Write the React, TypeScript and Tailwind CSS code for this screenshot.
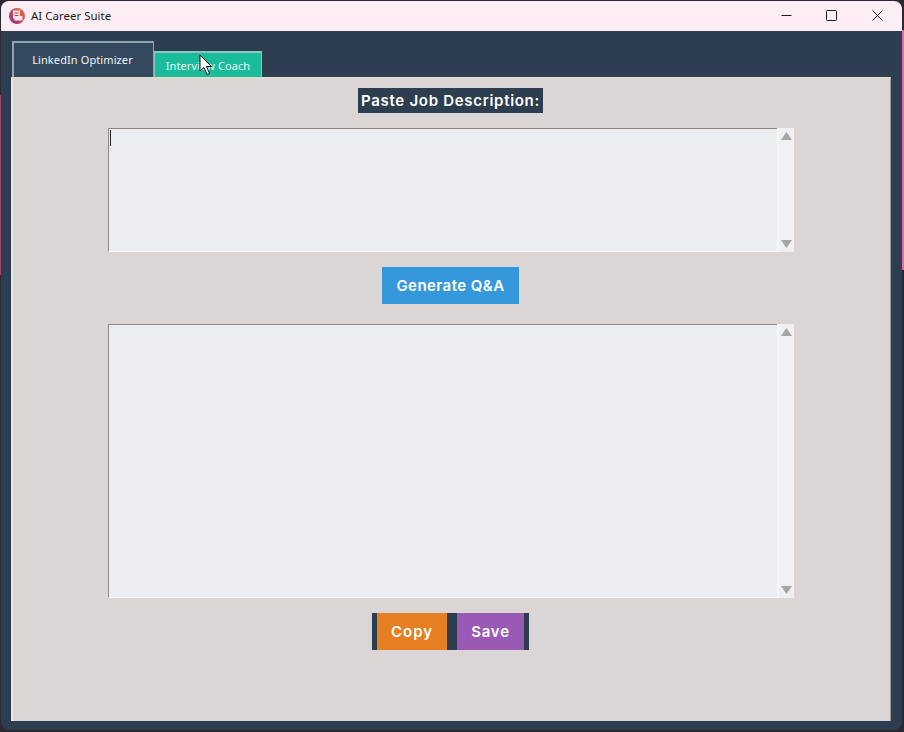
import { useState } from "react";

const uiFont = "font-['Noto_Sans','Open_Sans',sans-serif]";

const ScrollBox = ({ height, showCaret }: { height: string; showCaret?: boolean }) => (
  <div className={`flex w-[686px] ${height}`}>
    <div className="relative flex-1 bg-[#ecedf1] border-t border-l border-t-[#8f8985] border-l-[#8f8985] border-b border-b-white">
      {showCaret && <div className="absolute left-[1px] top-[1px] h-[16px] w-[1px] bg-[#222222]" />}
    </div>
    <div className="flex w-[17px] flex-col items-center justify-between bg-[#f0f0f2] py-[4px] border-l-2 border-l-[#f6f6f8]">
      <svg width="11" height="8" viewBox="0 0 11 8">
        <path d="M5.5 0 L11 8 L0 8 Z" fill="#a5a5a5" />
      </svg>
      <svg width="11" height="8" viewBox="0 0 11 8">
        <path d="M0 0 L11 0 L5.5 8 Z" fill="#a5a5a5" />
      </svg>
    </div>
  </div>
);

const App = () => {
  const [activeTab] = useState("linkedin");

  return (
    <div className="relative h-[732px] w-[904px] overflow-hidden bg-[#2b2733]">
      {/* bits of desktop showing past the window edge */}
      <div className="absolute right-0 top-[30px] h-[240px] w-[2px] bg-[#d96fa6]" />
      <div className="absolute left-0 top-[95px] h-[180px] w-[1px] bg-[#a8456f]" />

      <div className="relative flex h-[729px] w-[901px] ml-[1px] mt-[1px] flex-col overflow-hidden rounded-[8px] bg-[#2c3e50]">
        {/* title bar */}
        <div className="flex h-[30px] shrink-0 items-center justify-between bg-[#fdeef5] pl-[8px]">
          <div className="flex items-center gap-[6px]">
            <svg width="16" height="16" viewBox="0 0 16 16">
              <defs>
                <linearGradient id="logo" x1="1" y1="0" x2="0" y2="1">
                  <stop offset="0" stopColor="#f0703c" />
                  <stop offset="1" stopColor="#8e2a8c" />
                </linearGradient>
              </defs>
              <circle cx="8" cy="8" r="8" fill="url(#logo)" />
              <path d="M4 2.5 H11 V8 H13.5 V12.5 H5.5 V10.5 H4 Z" fill="#fbe3e3" />
              <path d="M5.5 5 H9.5 M5.5 7.5 H9.5" stroke="#d8434f" strokeWidth="1.2" />
            </svg>
            <span className={`text-[11.5px] text-[#1c1c1c] ${uiFont}`}>AI Career Suite</span>
          </div>
          <div className="flex items-center pb-[1px] pr-[2px]">
            <div className="flex w-[45px] justify-center">
              <svg width="11" height="11" viewBox="0 0 11 11">
                <path d="M0.5 5.5 H10.5" stroke="#1a1a1a" strokeWidth="1" />
              </svg>
            </div>
            <div className="flex w-[45px] justify-center">
              <svg width="11" height="11" viewBox="0 0 11 11">
                <rect x="0.5" y="0.5" width="10" height="10" rx="1" fill="none" stroke="#1a1a1a" strokeWidth="1" />
              </svg>
            </div>
            <div className="flex w-[46px] justify-center">
              <svg width="11" height="11" viewBox="0 0 11 11">
                <path d="M0.5 0.5 L10.5 10.5 M10.5 0.5 L0.5 10.5" stroke="#1a1a1a" strokeWidth="1" />
              </svg>
            </div>
          </div>
        </div>

        {/* tabs */}
        <div className="flex h-[46px] shrink-0 items-end pl-[11px] pt-[10px]">
          <div
            className={`flex h-[36px] w-[142px] items-center justify-center border-t-2 border-l-2 border-r border-[#8ea6ad] bg-[#34495e] pr-[2px] text-[11px] tracking-[0.1px] text-[#f2f5f6] ${uiFont} ${activeTab === "linkedin" ? "" : "opacity-80"}`}
          >
            LinkedIn Optimizer
          </div>
          <div
            className={`flex h-[26px] w-[108px] items-center justify-center border-t-2 border-l border-r border-[#8ec4bb] bg-[#1abc9c] pt-[3px] text-[11px] tracking-[0.1px] text-[#e6f7f3] ${uiFont}`}
          >
            Interview Coach
          </div>
        </div>

        {/* panel */}
        <div className="ml-[10px] flex h-[644px] w-[880px] flex-col items-center border-t-2 border-l-2 border-t-[#dfdbd3] border-l-[#ece8e2] border-r border-r-[#9a9a98] bg-[#d9d6d5] pr-[2px] pt-[9px] font-['Inter',sans-serif]">
          <div className="flex h-[25px] w-[185px] items-center justify-center whitespace-nowrap bg-[#2c3e50] pt-[1px] text-[15px] font-semibold tracking-[0.7px] text-white">
            Paste Job Description:
          </div>
          <div className="mt-[15px]">
            <ScrollBox height="h-[124px]" showCaret />
          </div>
          <button className="mt-[15px] h-[37px] w-[137px] bg-[#3498db] pt-[1px] text-[15px] font-semibold tracking-[0.45px] text-white">
            Generate Q&amp;A
          </button>
          <div className="mt-[20px]">
            <ScrollBox height="h-[274px]" />
          </div>
          <div className="mt-[15px] flex h-[37px] gap-[10px] bg-[#2c3e50] px-[5px]">
            <button className="w-[70px] bg-[#e67e22] pt-[1px] text-[15px] font-semibold tracking-[1px] text-white">Copy</button>
            <button className="w-[67px] bg-[#9b59b6] pt-[1px] text-[15px] font-semibold tracking-[0.8px] text-white">Save</button>
          </div>
        </div>
      </div>

      {/* mouse pointer over the second tab */}
      <svg className="absolute left-[199px] top-[54px]" width="14" height="22" viewBox="0 0 14 22">
        <path d="M1 1 L1 17 L5 13.5 L8 20.5 L10.5 19.5 L7.5 12.5 L12.5 12.5 Z" fill="#ffffff" stroke="#111111" strokeWidth="1" />
      </svg>
    </div>
  );
};

export default App;
